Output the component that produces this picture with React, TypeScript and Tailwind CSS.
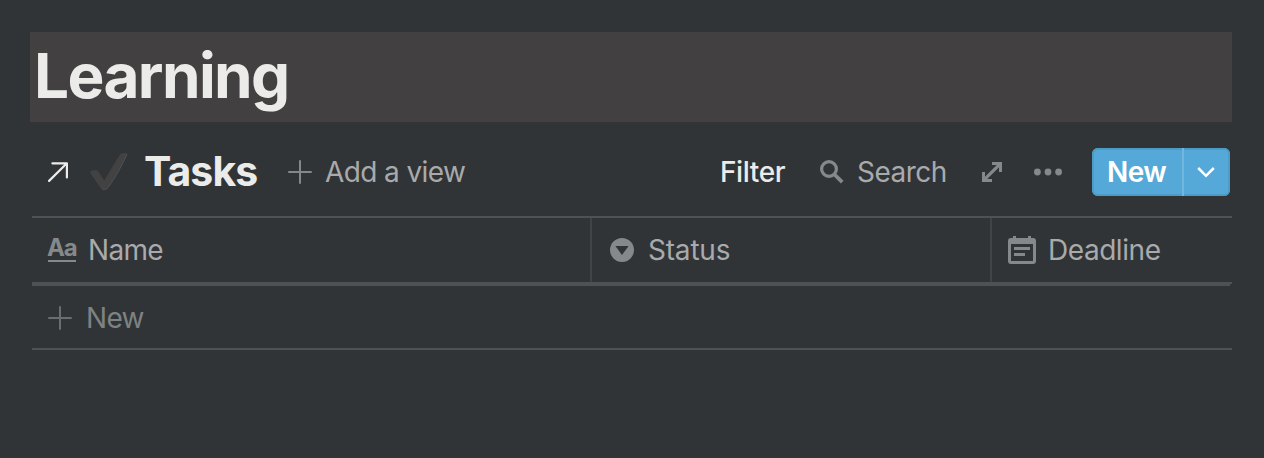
import type { ReactNode } from "react";

function Plus({ className }: { className: string }) {
  return (
    <svg viewBox="0 0 24 24" className={`h-6 w-6 shrink-0 ${className}`} fill="none" stroke="currentColor" strokeWidth="2" strokeLinecap="round">
      <path d="M12 1v22M1 12h22" />
    </svg>
  );
}

function Label({ className, children }: { className: string; children: ReactNode }) {
  return <span className={`block shrink-0 whitespace-nowrap text-[28px] leading-8 ${className}`}>{children}</span>;
}

function Toolbar() {
  return (
    <div className="mt-[26px] flex h-12 items-center pl-[18px] pr-0.5">
      <svg viewBox="0 0 20 20" className="h-5 w-5 shrink-0" fill="none" stroke="#ebebea" strokeWidth="2.2" strokeLinecap="round" strokeLinejoin="round">
        <path d="M1.1 18.9L18.9 1.3M4.4 1.3H18.9V15.5" />
      </svg>
      <svg viewBox="0 0 40 40" className="ml-[21px] h-10 w-10 shrink-0">
        <path d="M37.2 1C34 .6 31.5 1.2 29.8 4.2L15.2 28.6 9.4 19.6C8 17.4 3.6 17.6.8 20.2L11.4 35.8c1.8 2.6 5.8 2.4 7.8-.4C26.2 26 33.6 12.4 38.1 2.2c.3-.7-.2-1.1-.9-1.2z" fill="#424242" />
        <path d="M38.1 2.2C33.6 12.4 26.4 25.8 19.2 35.4c-1.6 2.2-4.2 2.8-6.2 1.8" fill="none" stroke="#56595a" strokeWidth="0.7" />
      </svg>
      <h2 className="-mt-0.5 ml-[15px] w-36 whitespace-nowrap text-[41px] font-[680] leading-[48px] tracking-[-0.9px] text-[#ebebea]">Tasks</h2>
      <Plus className="text-[#85888a]" />
      <Label className="ml-[13px] font-[440] tracking-[-0.6px] text-[#a9aaab]">Add a view</Label>
      <div className="flex-1" />
      <Label className="w-[100px] font-[450] tracking-[-0.4px] text-[#ebebea]">Filter</Label>
      <svg viewBox="0 0 24 24" className="h-6 w-6 shrink-0" fill="none" stroke="#85898c" strokeWidth="3.2">
        <circle cx="9" cy="9" r="7.4" />
        <path d="M14 14l8.2 8.2" strokeWidth="3.8" />
      </svg>
      <Label className="ml-[13px] w-[125px] font-[440] tracking-[-0.5px] text-[#a9aaab]">Search</Label>
      <svg viewBox="0 0 20 20" className="h-5 w-5 shrink-0" fill="#85898c">
        <path d="M10 0h10v10h-3V5.2L5.2 17H10v3H0V10h3v4.8L14.8 3H10z" />
      </svg>
      <svg viewBox="0 0 28 8" className="ml-8 h-2 w-7 shrink-0" fill="#85898c">
        <circle cx="3.4" cy="4" r="3.4" />
        <circle cx="14" cy="4" r="3.4" />
        <circle cx="24.6" cy="4" r="3.4" />
      </svg>
      <div className="ml-[30px] flex h-12 w-[138px] shrink-0 overflow-hidden rounded-md bg-[#55a9d8] inset-ring-2 inset-ring-[#4d9cc6]">
        <button className="flex w-[92px] items-center border-r-2 border-[#70b6dd] pl-[15px]">
          <Label className="font-semibold tracking-[-0.6px] text-white">New</Label>
        </button>
        <button className="flex flex-1 items-center justify-center pr-0.5">
          <svg viewBox="0 0 18 12" className="h-3 w-[18px]" fill="none" stroke="white" strokeWidth="2.5">
            <path d="M1.2 2L9 9.8 16.8 2" />
          </svg>
        </button>
      </div>
    </div>
  );
}

function HeaderRow() {
  return (
    <div className="flex h-16">
      <div className="flex w-[560px] items-center border-r-2 border-[#3f4446] pl-4">
        <div className="mt-px flex h-[23px] w-7 shrink-0 flex-col border-b-2 border-[#85898c]">
          <span className="-ml-px text-[24px] font-bold leading-[18px] tracking-[-1.2px] text-[#85898c]">Aa</span>
        </div>
        <Label className="ml-3 font-[440] tracking-[-0.7px] text-[#a9aaab]">Name</Label>
      </div>
      <div className="flex w-[400px] items-center border-r-2 border-[#3f4446] pl-[18px]">
        <svg viewBox="0 0 24 24" className="h-6 w-6 shrink-0">
          <circle cx="12" cy="12" r="12" fill="#85898c" />
          <path d="M5.4 8h13.2L12 17z" fill="#303437" />
        </svg>
        <Label className="ml-3.5 font-[440] tracking-[-0.2px] text-[#a9aaab]">Status</Label>
      </div>
      <div className="flex flex-1 items-center pl-4">
        <svg viewBox="0 0 28 28" className="h-7 w-7 shrink-0" fill="#85898c">
          <path fillRule="evenodd" d="M5 0h3v2h12V0h3v2h2a3 3 0 0 1 3 3v20a3 3 0 0 1-3 3H3a3 3 0 0 1-3-3V5a3 3 0 0 1 3-3h2zM3 8v17h22V8z" />
          <path d="M6 11h16v3H6zM6 17h11v3H6z" />
        </svg>
        <Label className="ml-3 font-[440] tracking-[-0.45px] text-[#a9aaab]">Deadline</Label>
      </div>
    </div>
  );
}

export default function App() {
  return (
    <main className="flex h-[458px] w-full flex-col overflow-hidden border-b border-[#37333a] bg-[#303437] pl-[30px] pr-8 pt-8 font-['Inter','Liberation_Sans',sans-serif]">
      <header className="flex h-[90px] shrink-0 items-center bg-[#434041] pl-1">
        <h1 className="-mt-0.5 whitespace-nowrap text-[62px] font-[660] leading-[90px] tracking-[-1.6px] text-[#ebebea]">Learning</h1>
      </header>
      <Toolbar />
      <section className="ml-0.5 mt-5 border-y-2 border-[#4d5255]">
        <HeaderRow />
        <div className="h-0.5 bg-[#4d5255]" />
        <div className="mr-0.5 h-0.5 bg-[#4d5255]" />
        <div className="flex h-[62px] items-center pl-4 pt-0.5">
          <Plus className="text-[#6a6e71]" />
          <Label className="ml-3.5 font-[440] tracking-[-0.7px] text-[#7f8283]">New</Label>
        </div>
      </section>
    </main>
  );
}
